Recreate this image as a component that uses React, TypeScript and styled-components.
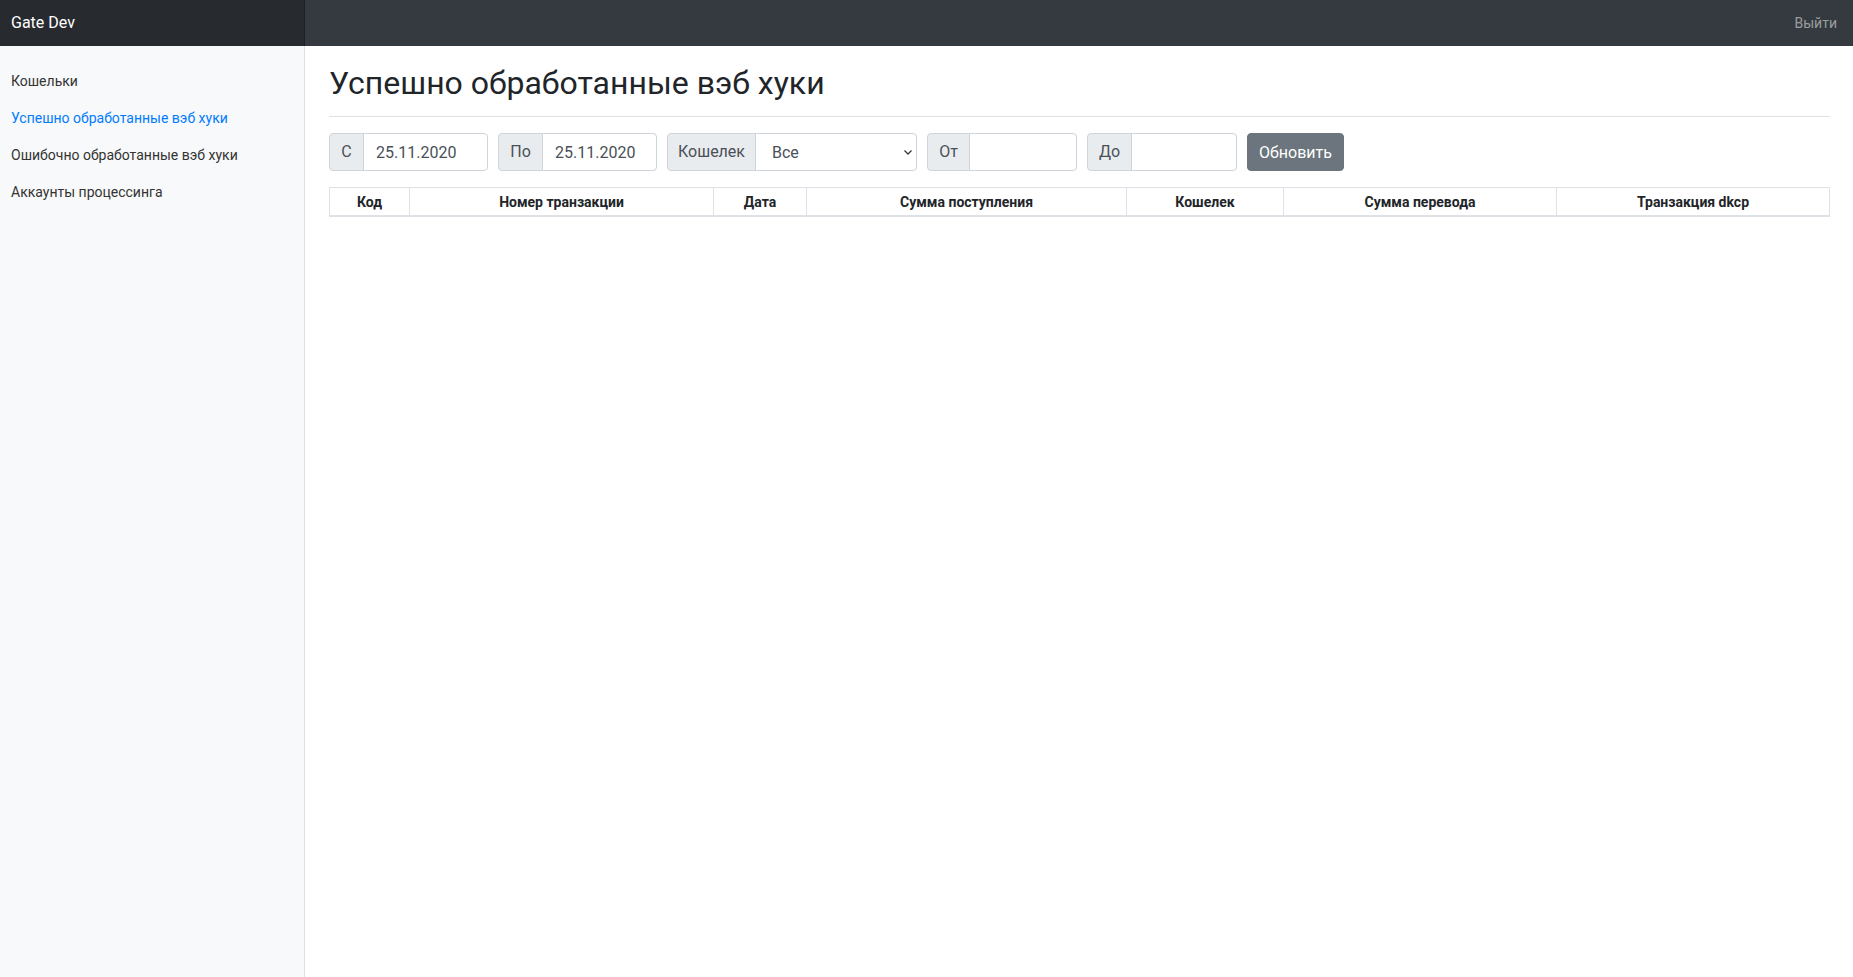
import React from "react";
import styled, { createGlobalStyle } from "styled-components";

const GlobalStyle = createGlobalStyle`
  html, body {
    margin: 0;
    padding: 0;
    background: #fff;
  }
  body {
    font-family: "Segoe UI", Roboto, "Noto Sans", "Liberation Sans", sans-serif;
    color: #212529;
    font-size: 16px;
    line-height: 1.5;
  }
  * { box-sizing: border-box; }
`;

const Page = styled.div`
  display: flex;
  flex-direction: column;
  min-height: 100vh;
`;

const Navbar = styled.header`
  display: flex;
  align-items: stretch;
  height: 46px;
  background: #343a40;
  flex-shrink: 0;
`;

const Brand = styled.a`
  display: flex;
  align-items: center;
  width: 305px;
  padding: 0 11px;
  background: rgba(0, 0, 0, 0.25);
  box-shadow: inset -1px 0 0 rgba(0, 0, 0, 0.25);
  color: #fff;
  font-size: 16px;
  text-decoration: none;
`;

const NavSpacer = styled.div`
  flex: 1;
`;

const Logout = styled.a`
  display: flex;
  align-items: center;
  padding: 0 16px;
  color: rgba(255, 255, 255, 0.5);
  font-size: 14px;
  text-decoration: none;
`;

const Body = styled.div`
  display: flex;
  flex: 1;
`;

const Sidebar = styled.nav`
  width: 305px;
  flex-shrink: 0;
  background: #f8f9fa;
  box-shadow: inset -1px 0 0 rgba(0, 0, 0, 0.1);
  padding-top: 17px;
`;

const SideList = styled.ul`
  list-style: none;
  margin: 0;
  padding: 0;
  display: flex;
  flex-direction: column;
`;

const SideLink = styled.a<{ $active?: boolean }>`
  display: block;
  padding: 8px 11px;
  font-size: 14px;
  line-height: 21px;
  font-weight: 400;
  color: ${(p) => (p.$active ? "#007bff" : "#333")};
  text-decoration: none;
`;

const Main = styled.main`
  flex: 1;
  padding: 0 24px;
`;

const Header = styled.div`
  padding-top: 18px;
  padding-bottom: 8px;
  border-bottom: 1px solid #dee2e6;
  margin-bottom: 16px;
`;

const Title = styled.h1`
  margin: 0 0 6px;
  font-size: 32px;
  font-weight: 400;
  line-height: 1.2;
  color: #212529;
`;

const Filters = styled.form`
  display: flex;
  align-items: center;
  gap: 10px;
  margin-bottom: 16px;
`;

const Group = styled.div<{ $w: number }>`
  display: flex;
  width: ${(p) => p.$w}px;
  height: 38px;
`;

const Addon = styled.span<{ $w: number }>`
  display: flex;
  align-items: center;
  justify-content: center;
  width: ${(p) => p.$w}px;
  flex-shrink: 0;
  background: #e9ecef;
  border: 1px solid #ced4da;
  border-radius: 4px 0 0 4px;
  color: #495057;
  font-size: 16px;
  white-space: nowrap;
`;

const Input = styled.input`
  flex: 1;
  min-width: 0;
  height: 38px;
  margin-left: -1px;
  padding: 6px 12px;
  border: 1px solid #ced4da;
  border-radius: 0 4px 4px 0;
  color: #495057;
  font-family: inherit;
  font-size: 16px;
  background: #fff;
  outline: none;
`;

const SelectWrap = styled.div`
  position: relative;
  flex: 1;
  display: flex;
`;

const Select = styled.select`
  flex: 1;
  height: 38px;
  margin-left: -1px;
  padding: 6px 28px 6px 16px;
  border: 1px solid #ced4da;
  border-radius: 0 4px 4px 0;
  color: #495057;
  font-family: inherit;
  font-size: 16px;
  background: #fff;
  appearance: none;
  outline: none;
`;

const Chevron = styled.svg`
  position: absolute;
  right: 5px;
  top: 17px;
  pointer-events: none;
`;

const Button = styled.button`
  height: 38px;
  width: 97px;
  padding: 0 11px;
  background: #6c757d;
  border: 1px solid #6c757d;
  border-radius: 4px;
  color: #fff;
  font-family: inherit;
  font-size: 16px;
  cursor: pointer;
`;

const Table = styled.table`
  width: 100%;
  table-layout: fixed;
  border-collapse: collapse;
  border: 1px solid #dee2e6;
  font-size: 14px;
`;

const Th = styled.th<{ $w: number }>`
  width: ${(p) => p.$w}px;
  padding: 4px 5px 2px;
  line-height: 21px;
  border: 1px solid #dee2e6;
  border-bottom: 2px solid #dee2e6;
  font-weight: 700;
  text-align: center;
  color: #212529;
  white-space: nowrap;
`;

const navItems = [
  { label: "Кошельки" },
  { label: "Успешно обработанные вэб хуки", active: true },
  { label: "Ошибочно обработанные вэб хуки" },
  { label: "Аккаунты процессинга" },
];

const columns: [string, number][] = [
  ["Код", 80],
  ["Номер транзакции", 304],
  ["Дата", 93],
  ["Сумма поступления", 320],
  ["Кошелек", 157],
  ["Сумма перевода", 273],
  ["Транзакция dkcp", 273],
];

export default function App() {
  return (
    <Page>
      <GlobalStyle />
      <Navbar>
        <Brand href="#">Gate Dev</Brand>
        <NavSpacer />
        <Logout href="#">Выйти</Logout>
      </Navbar>
      <Body>
        <Sidebar>
          <SideList>
            {navItems.map((n) => (
              <li key={n.label}>
                <SideLink href="#" $active={n.active}>
                  {n.label}
                </SideLink>
              </li>
            ))}
          </SideList>
        </Sidebar>
        <Main>
          <Header>
            <Title>Успешно обработанные вэб хуки</Title>
          </Header>
          <Filters onSubmit={(e) => e.preventDefault()}>
            <Group $w={159}>
              <Addon $w={35}>С</Addon>
              <Input defaultValue="25.11.2020" />
            </Group>
            <Group $w={159}>
              <Addon $w={45}>По</Addon>
              <Input defaultValue="25.11.2020" />
            </Group>
            <Group $w={250}>
              <Addon $w={89}>Кошелек</Addon>
              <SelectWrap>
                <Select defaultValue="all">
                  <option value="all">Все</option>
                </Select>
                <Chevron width="8" height="5" viewBox="0 0 8 5">
                  <path d="M0.5 0.5 L4 4 L7.5 0.5" fill="none" stroke="#343a40" strokeWidth="1.3" />
                </Chevron>
              </SelectWrap>
            </Group>
            <Group $w={150}>
              <Addon $w={43}>От</Addon>
              <Input />
            </Group>
            <Group $w={150}>
              <Addon $w={45}>До</Addon>
              <Input />
            </Group>
            <Button type="submit">Обновить</Button>
          </Filters>
          <Table>
            <thead>
              <tr>
                {columns.map(([c, w]) => (
                  <Th key={c} $w={w}>
                    {c}
                  </Th>
                ))}
              </tr>
            </thead>
            <tbody />
          </Table>
        </Main>
      </Body>
    </Page>
  );
}
